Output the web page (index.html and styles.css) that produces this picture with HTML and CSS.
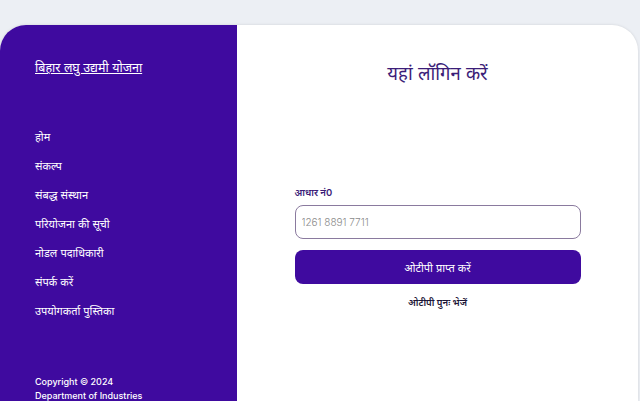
FILE: index.html
```html
<!DOCTYPE html>
<html lang="hi">
<head>
    <meta charset="UTF-8">
    <meta name="viewport" content="width=device-width, initial-scale=1.0">
    <title>बिहार लघु उद्यमी योजना - लॉगिन</title>
    <link rel="stylesheet" href="styles.css">
</head>
<body>
    <div class="login-card">
        <div class="sidebar">
            <a class="brand" href="#">बिहार लघु उद्यमी योजना</a>
            <div class="side-links">
                <a href="#">होम</a>
                <a href="#">संकल्प</a>
                <a href="#">संबद्ध संस्थान</a>
                <a href="#">परियोजना की सूची</a>
                <a href="#">नोडल पदाधिकारी</a>
                <a href="#">संपर्क करें</a>
                <a href="#">उपयोगकर्ता पुस्तिका</a>
            </div>
            <div class="copyright">
                <p>Copyright © 2024</p>
                <p>Department of Industries</p>
            </div>
        </div>
        <div class="login-panel">
            <h1>यहां लॉगिन करें</h1>
            <form class="login-form">
                <label for="aadhaar">आधार नं0</label>
                <input type="text" id="aadhaar" placeholder="1261 8891 7711">
                <button type="button">ओटीपी प्राप्त करें</button>
                <a class="resend" href="#">ओटीपी पुनः भेजें</a>
            </form>
        </div>
    </div>
</body>
</html>
```

FILE: styles.css
```css
body {
    margin: 0;
    padding: 25px 2px 0 0;
    background-color: #eceff4;
    font-family: Inter, "Noto Sans", sans-serif;
    overflow: hidden;
}

.login-card {
    display: flex;
    height: 376px;
    background-color: #fff;
    border-radius: 26px 26px 0 0;
    box-shadow: 0 0 3px rgba(0, 0, 0, 0.12);
    overflow: hidden;
}

.sidebar {
    display: flex;
    flex-direction: column;
    width: 237px;
    padding: 33px 35px 0;
    box-sizing: border-box;
    background-color: #3f0a9f;
    color: #fff;
}

.sidebar a {
    color: #fff;
}

.brand {
    font-size: 12.5px;
    line-height: 20px;
    text-decoration: underline;
}

.side-links {
    display: flex;
    flex-direction: column;
    gap: 11px;
    margin-top: 50px;
}

.side-links a {
    font-size: 11px;
    line-height: 18px;
    text-decoration: none;
}

.copyright {
    margin-top: 55px;
}

.copyright p {
    margin: 0;
    font-size: 9px;
    font-weight: 500;
    line-height: 14px;
}

.login-panel {
    display: flex;
    flex-direction: column;
    align-items: center;
    flex: 1;
}

.login-panel h1 {
    margin: 35px 0 0;
    font-size: 18.5px;
    font-weight: 400;
    color: #3b1d78;
}

.login-form {
    display: flex;
    flex-direction: column;
    width: 286px;
    margin-top: 101px;
}

.login-form label {
    font-size: 9.5px;
    font-weight: 600;
    color: #3b1d78;
    margin-bottom: 6px;
}

.login-form input {
    height: 34px;
    padding: 0 6px;
    border: 1px solid #8a7a9e;
    border-radius: 8px;
    font-family: inherit;
    font-size: 10px;
    font-weight: 300;
    box-sizing: border-box;
}

.login-form input::placeholder {
    color: #8b8b8b;
}

.login-form button {
    height: 34px;
    margin-top: 11px;
    border: none;
    border-radius: 8px;
    background-color: #3f0a9f;
    color: #fff;
    font-family: inherit;
    font-size: 11px;
}

.resend {
    margin-top: 12px;
    align-self: center;
    font-size: 9.5px;
    font-weight: 600;
    color: #1d1638;
    text-decoration: none;
}
```
